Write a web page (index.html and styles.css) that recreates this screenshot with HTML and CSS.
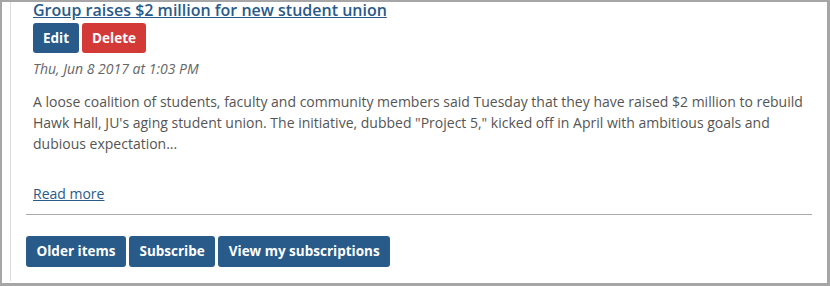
FILE: index.html
```html
<!DOCTYPE html>
<html>
<head>
<meta charset="utf-8">
<link rel="stylesheet" href="styles.css">
</head>
<body>
<div class="frame">
  <div class="region">
    <div class="content">
      <article class="item">
        <h2 class="item-title"><a href="#">Group raises $2 million for new student union</a></h2>
        <div class="item-actions">
          <button class="btn btn-primary">Edit</button>
          <button class="btn btn-danger">Delete</button>
        </div>
        <div class="item-date">Thu, Jun 8 2017 at 1:03 PM</div>
        <p class="item-summary">A loose coalition of students, faculty and community members said Tuesday that they have raised $2 million to rebuild Hawk Hall, JU's aging student union. The initiative, dubbed "Project 5," kicked off in April with ambitious goals and dubious expectation...</p>
        <p class="item-more"><a href="#">Read more</a></p>
      </article>
      <hr class="divider">
      <div class="footer-actions">
        <button class="btn btn-primary">Older items</button>
        <button class="btn btn-primary">Subscribe</button>
        <button class="btn btn-primary">View my subscriptions</button>
      </div>
    </div>
  </div>
</div>
</body>
</html>
```
FILE: styles.css
```css
* { box-sizing: border-box; }
html, body { margin: 0; padding: 0; background: #fff; }
body {
  font-family: "Open Sans", "Liberation Sans", sans-serif;
  font-size: 14px;
  color: #555;
  overflow: hidden;
}
.frame {
  width: 830px;
  height: 286px;
  border-style: solid;
  border-color: #a6a6a6;
  border-width: 2px 3px 3px 2px;
  overflow: hidden;
}
.region {
  height: 100%;
  margin-left: 8px;
  border-left: 1px solid #dcdcdc;
  padding: 0 15px 0 15px;
}
.item { padding-left: 7px; }
.item-title {
  margin: -2px 0 0 0;
  font-size: 16px;
  line-height: 20px;
  font-weight: 600;
}
.item-title a { color: #2a5a8a; text-decoration: underline; }
.item-actions {
  display: flex;
  gap: 3px;
  margin-top: 3px;
}
.btn {
  font-family: "Open Sans", "Liberation Sans", sans-serif;
  font-weight: 700;
  font-size: 13.5px;
  color: #fff;
  border: 0;
  border-radius: 3px;
  padding: 0 10px;
  height: 30px;
  line-height: 30px;
  cursor: pointer;
}
.btn-primary { background: #285a8a; }
.btn-danger { background: #d33a37; }
.item-date {
  margin-top: 6px;
  font-style: italic;
  color: #666;
  line-height: 20px;
}
.item-summary {
  margin: 12px 0 0 0;
  line-height: 21px;
  color: #555;
}
.item-more {
  margin: 29px 0 0 0;
  line-height: 21px;
}
.item-more a { color: #2a5a8a; text-decoration: underline; }
.divider {
  margin: 10px 0 0 0;
  border: 0;
  border-top: 1px solid #aaa;
  height: 0;
}
.footer-actions {
  display: flex;
  gap: 3px;
  margin-top: 21px;
}
.footer-actions .btn { height: 31px; line-height: 31px; padding: 0 10.5px; }
```
